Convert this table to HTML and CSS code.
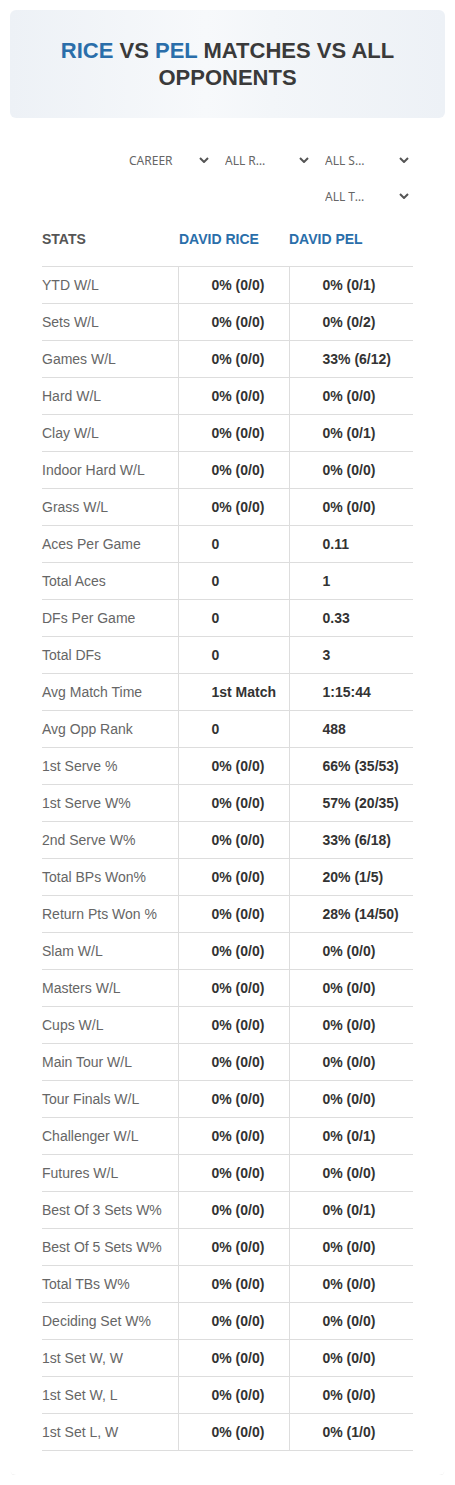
FILE: index.html
```html
<!DOCTYPE html>
<html lang="en">
<head>
	<meta charset="UTF-8">
	<title>Rice vs Pel</title>
	<link rel="stylesheet" href="styles.css">
</head>
<body>
	<div class="page">
		<div class="head">
			<h1><span class="blue">RICE</span> VS <span class="blue">PEL</span> MATCHES VS ALL OPPONENTS</h1>
		</div>

		<div class="panel">
			<div class="filters">
				<div class="pick"><span class="pick-text">CAREER</span><svg class="chev" viewBox="0 0 10 6"><path d="M1 1l4 4 4-4"/></svg></div>
				<div class="pick"><span class="pick-text">ALL ROUNDS</span><svg class="chev" viewBox="0 0 10 6"><path d="M1 1l4 4 4-4"/></svg></div>
				<div class="pick"><span class="pick-text">ALL SURFACES</span><svg class="chev" viewBox="0 0 10 6"><path d="M1 1l4 4 4-4"/></svg></div>
				<div class="pick"><span class="pick-text">ALL TOURNAMENTS</span><svg class="chev" viewBox="0 0 10 6"><path d="M1 1l4 4 4-4"/></svg></div>
			</div>

			<table class="stats">
				<thead>
					<tr>
						<th class="c1">STATS</th>
						<th class="c2">DAVID RICE</th>
						<th class="c3">DAVID PEL</th>
					</tr>
				</thead>
				<tbody>
					<tr><td>YTD W/L</td><td>0% (0/0)</td><td>0% (0/1)</td></tr>
					<tr><td>Sets W/L</td><td>0% (0/0)</td><td>0% (0/2)</td></tr>
					<tr><td>Games W/L</td><td>0% (0/0)</td><td>33% (6/12)</td></tr>
					<tr><td>Hard W/L</td><td>0% (0/0)</td><td>0% (0/0)</td></tr>
					<tr><td>Clay W/L</td><td>0% (0/0)</td><td>0% (0/1)</td></tr>
					<tr><td>Indoor Hard W/L</td><td>0% (0/0)</td><td>0% (0/0)</td></tr>
					<tr><td>Grass W/L</td><td>0% (0/0)</td><td>0% (0/0)</td></tr>
					<tr><td>Aces Per Game</td><td>0</td><td>0.11</td></tr>
					<tr><td>Total Aces</td><td>0</td><td>1</td></tr>
					<tr><td>DFs Per Game</td><td>0</td><td>0.33</td></tr>
					<tr><td>Total DFs</td><td>0</td><td>3</td></tr>
					<tr><td>Avg Match Time</td><td>1st Match</td><td>1:15:44</td></tr>
					<tr><td>Avg Opp Rank</td><td>0</td><td>488</td></tr>
					<tr><td>1st Serve %</td><td>0% (0/0)</td><td>66% (35/53)</td></tr>
					<tr><td>1st Serve W%</td><td>0% (0/0)</td><td>57% (20/35)</td></tr>
					<tr><td>2nd Serve W%</td><td>0% (0/0)</td><td>33% (6/18)</td></tr>
					<tr><td>Total BPs Won%</td><td>0% (0/0)</td><td>20% (1/5)</td></tr>
					<tr><td>Return Pts Won %</td><td>0% (0/0)</td><td>28% (14/50)</td></tr>
					<tr><td>Slam W/L</td><td>0% (0/0)</td><td>0% (0/0)</td></tr>
					<tr><td>Masters W/L</td><td>0% (0/0)</td><td>0% (0/0)</td></tr>
					<tr><td>Cups W/L</td><td>0% (0/0)</td><td>0% (0/0)</td></tr>
					<tr><td>Main Tour W/L</td><td>0% (0/0)</td><td>0% (0/0)</td></tr>
					<tr><td>Tour Finals W/L</td><td>0% (0/0)</td><td>0% (0/0)</td></tr>
					<tr><td>Challenger W/L</td><td>0% (0/0)</td><td>0% (0/1)</td></tr>
					<tr><td>Futures W/L</td><td>0% (0/0)</td><td>0% (0/0)</td></tr>
					<tr><td>Best Of 3 Sets W%</td><td>0% (0/0)</td><td>0% (0/1)</td></tr>
					<tr><td>Best Of 5 Sets W%</td><td>0% (0/0)</td><td>0% (0/0)</td></tr>
					<tr><td>Total TBs W%</td><td>0% (0/0)</td><td>0% (0/0)</td></tr>
					<tr><td>Deciding Set W%</td><td>0% (0/0)</td><td>0% (0/0)</td></tr>
					<tr><td>1st Set W, W</td><td>0% (0/0)</td><td>0% (0/0)</td></tr>
					<tr><td>1st Set W, L</td><td>0% (0/0)</td><td>0% (0/0)</td></tr>
					<tr><td>1st Set L, W</td><td>0% (0/0)</td><td>0% (1/0)</td></tr>
				</tbody>
			</table>
		</div>
	</div>
</body>
</html>
```

FILE: styles.css
```css
body{
	margin: 0;
	background: #fff;
	font-family: "Liberation Sans", Arial, sans-serif;
	color: #333;
}

.page{
	padding: 10px 10px 0;
}

.head{
	height: 108px;
	border-radius: 6px;
	background: linear-gradient(90deg, #edf1f6 0%, #f7f9fb 45%, #f3f6f9 60%, #edf1f6 100%);
	display: flex;
	align-items: center;
	justify-content: center;
}

.head h1{
	margin: 0;
	padding: 0 30px;
	font-size: 22px;
	line-height: 27px;
	font-weight: bold;
	text-align: center;
	color: #3a3a3a;
}

.blue{
	color: #2a6eaa;
}

.panel{
	padding: 27px 32px 24px;
	border-radius: 0 0 6px 6px;
	box-shadow: 0 2px 1px -1px rgba(0,0,0,0.08);
}

.filters{
	display: flex;
	flex-wrap: wrap;
	justify-content: flex-end;
	row-gap: 6px;
}

.pick{
	width: 100px;
	height: 30px;
	box-sizing: border-box;
	padding: 0 4px 0 12px;
	display: flex;
	align-items: center;
	justify-content: space-between;
	font-family: "Noto Sans", sans-serif;
	font-size: 12px;
	color: #666;
}

.pick:first-child{
	padding-left: 16px;
}

.pick-text{
	width: 47px;
	white-space: nowrap;
	overflow: hidden;
	text-overflow: ellipsis;
}

.chev{
	width: 10px;
	height: 6px;
	fill: none;
	stroke: #555;
	stroke-width: 2;
}

.stats{
	width: 100%;
	border-collapse: collapse;
	font-size: 14px;
}

.stats th{
	height: 55px;
	padding: 0;
	text-align: left;
	font-weight: bold;
	color: #2a6eaa;
	border-bottom: 1px solid #ddd;
}

.stats th.c1{
	width: 136px;
	color: #555;
}

.stats th.c2{
	width: 110px;
	padding-left: 1px;
}

.stats td{
	height: 36px;
	padding: 0 0 0 33px;
	border-bottom: 1px solid #ddd;
	border-left: 1px solid #ddd;
	font-weight: bold;
	color: #333;
}

.stats td:first-child{
	padding-left: 0;
	border-left: none;
	font-weight: normal;
	color: #666;
}
```
